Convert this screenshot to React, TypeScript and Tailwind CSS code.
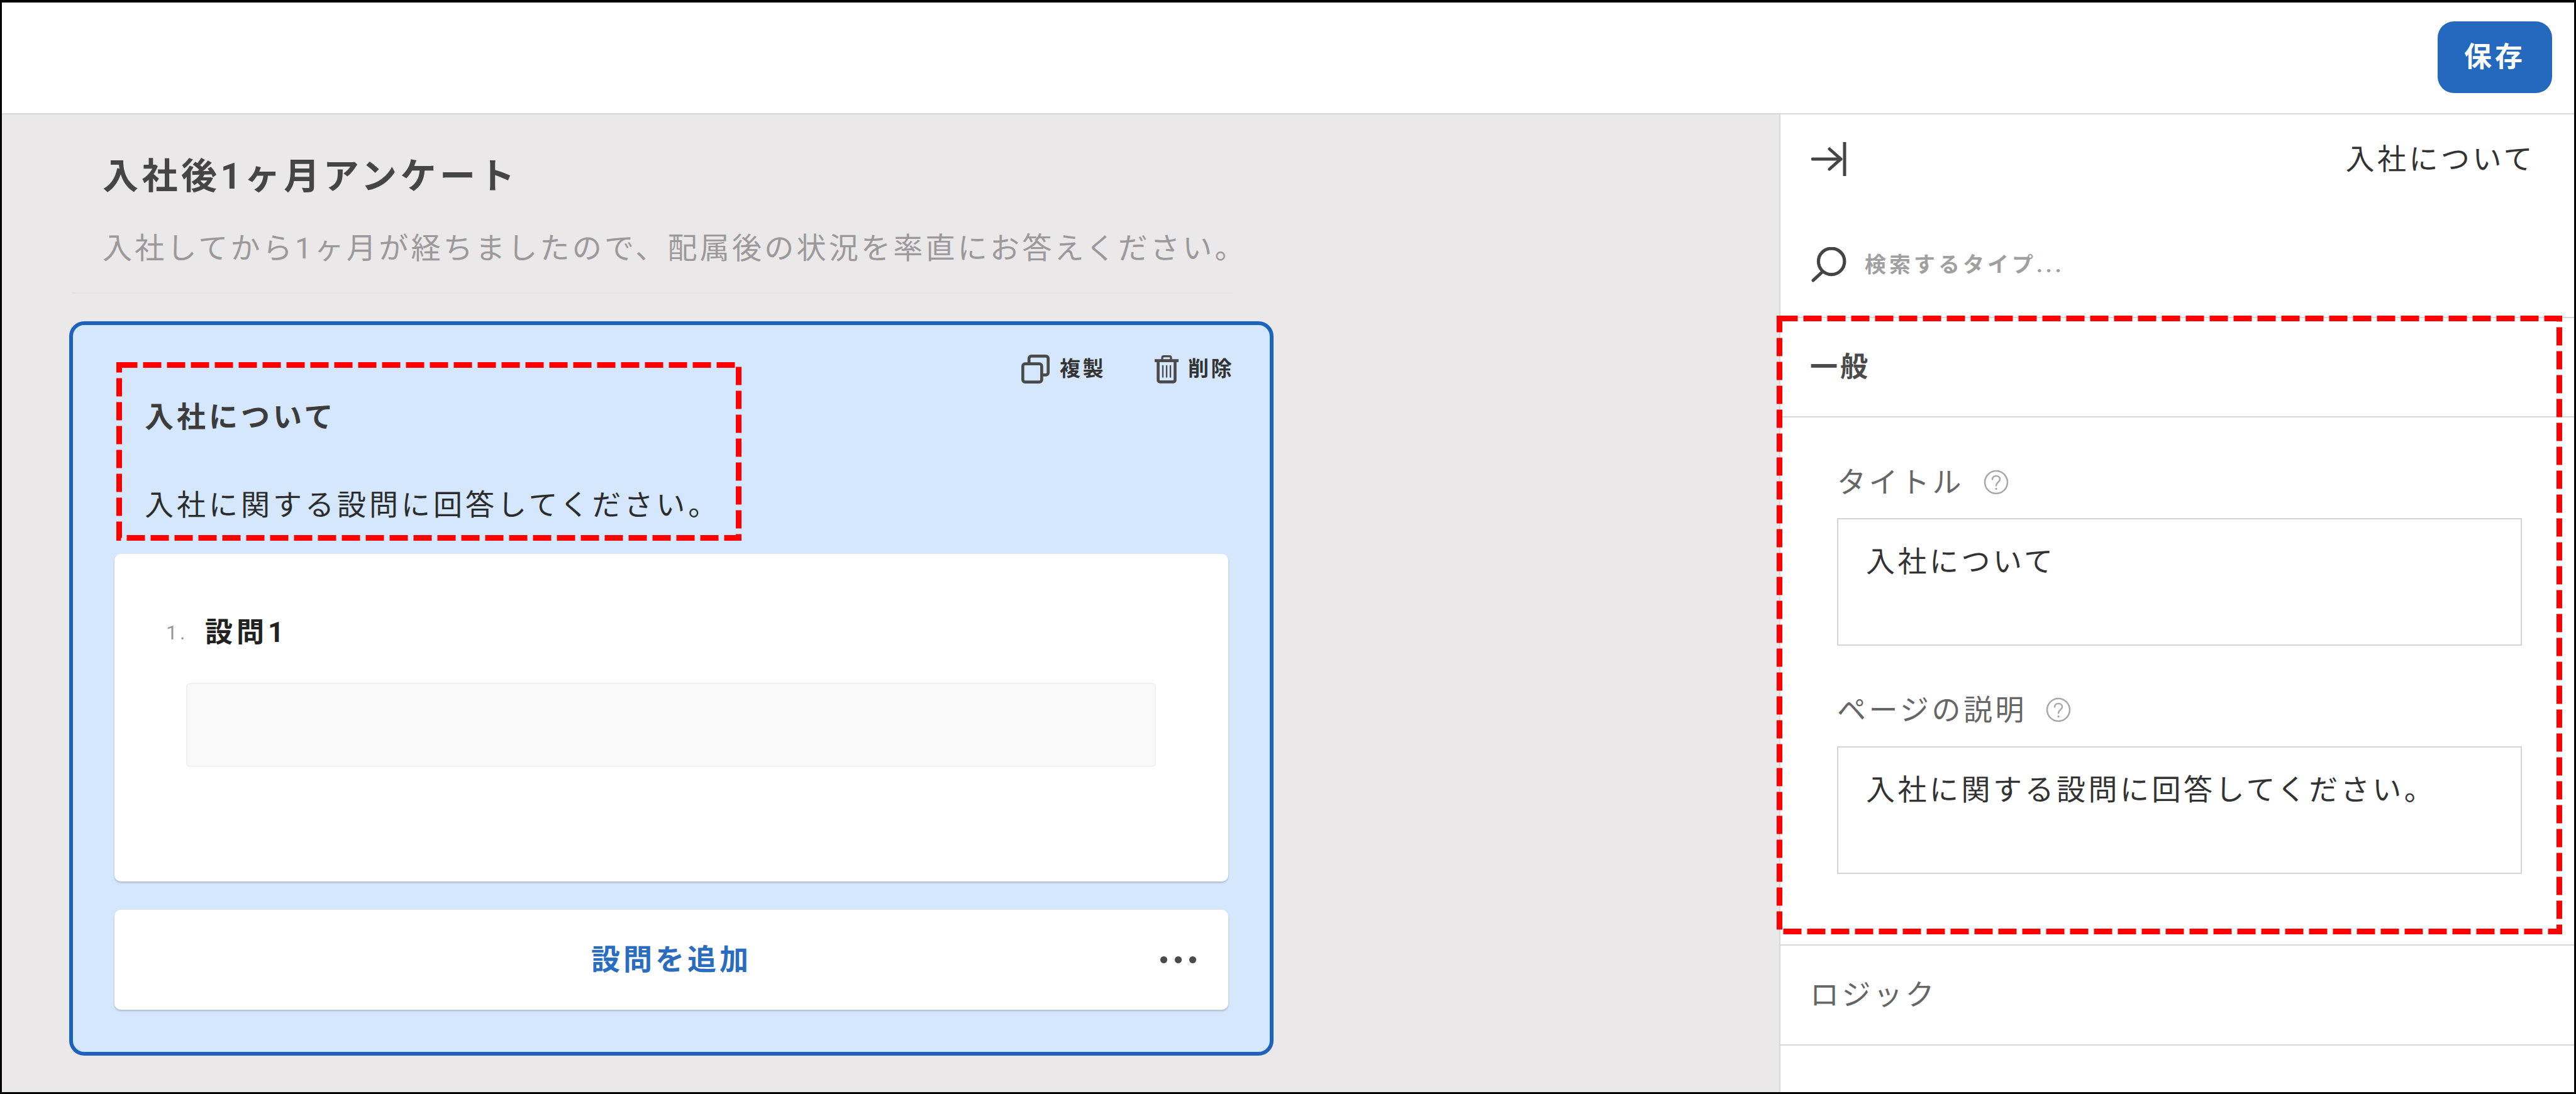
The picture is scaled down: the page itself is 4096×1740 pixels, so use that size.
import React from "react";

function CopyIcon() {
  return (
    <svg viewBox="0 0 48 49" className="w-[45px] h-[46px] shrink-0" fill="none" stroke="#4a4a4a" strokeWidth="5">
      <rect x="2.5" y="15.5" width="32" height="31" rx="4" />
      <path d="M13 15V6.5a4 4 0 0 1 4-4h24.500a4 4 0 0 1 4 4v24a4 4 0 0 1-4 4H35" />
    </svg>
  );
}

function TrashIcon() {
  return (
    <svg viewBox="0 0 41 49" className="w-[38px] h-[46px] shrink-0" fill="none" stroke="#4a4a4a">
      <path d="M1 10h39" strokeWidth="5" strokeLinecap="round" />
      <path d="M13 9V5a2.500 2.500 0 0 1 2.500-2.500h10A2.500 2.500 0 0 1 28 5v4" strokeWidth="3.500" />
      <path d="M6 10v33.500a3 3 0 0 0 3 3h23a3 3 0 0 0 3-3V10" strokeWidth="5" />
      <path d="M14 18v21M20.500 18v21M27 18v21" strokeWidth="2.500" />
    </svg>
  );
}

function CollapseIcon() {
  return (
    <svg viewBox="0 0 56 56" className="w-[56px] h-[56px] shrink-0" fill="none" stroke="#454545" strokeWidth="5" strokeLinecap="round" strokeLinejoin="round">
      <path d="M2 28h45" />
      <path d="M29 12l18 16-18 16" />
      <path d="M53 1v54" strokeLinecap="butt" />
    </svg>
  );
}

function SearchIcon() {
  return (
    <svg viewBox="0 0 54 54" className="w-[56px] h-[56px] shrink-0" fill="none" stroke="#454545" strokeWidth="5" strokeLinecap="round">
      <circle cx="31" cy="22" r="20" />
      <path d="M17 38L3 51" />
    </svg>
  );
}

function HelpIcon() {
  return (
    <svg viewBox="0 0 40 40" className="w-[40px] h-[40px] shrink-0" fill="none" stroke="#a8a8a8" strokeWidth="2.500" strokeLinecap="round">
      <circle cx="20" cy="20" r="18" />
      <path d="M14 15.500c0-3.500 2.500-5.500 6-5.500s6 2.200 6 5.200c0 4.800-6 4.800-6 10" />
      <circle cx="20" cy="30.500" r="1.200" fill="#a8a8a8" strokeWidth="1" />
    </svg>
  );
}

function Annotation({ width, height, className }: { width: number; height: number; className: string }) {
  return (
    <svg className={className} width={width} height={height} fill="none">
      <rect x="4.500" y="4.500" width={width - 9} height={height - 9} stroke="#ff0000" strokeWidth="9" strokeDasharray="29 9" />
    </svg>
  );
}

export default function App() {
  return (
    <div className="relative w-[4096px] h-[1740px] overflow-hidden border-x-[3px] border-t-4 border-b-[3px] border-black bg-white font-['Roboto','Noto_Sans_CJK_JP',sans-serif]">
      <header className="flex h-[178px] items-start justify-end border-b-2 border-[#d8d8d8] bg-white pr-[35px] pt-[30px]">
        <button className="flex h-[114px] w-[182px] items-center justify-center rounded-[26px] bg-[#2469bd] text-[44px] font-bold tracking-[5px] text-white">
          保存
        </button>
      </header>

      <div className="flex h-[1555px]">
        <main className="w-[2826px] shrink-0 bg-[#eae8e9] pl-[107px]">
          <div className="w-[1850px]">
            <div className="pl-[53px] pt-[63px]">
              <h1 className="whitespace-nowrap text-[57px] font-bold leading-[72px] tracking-[5.500px] text-[#454545]">入社後1ヶ月アンケート</h1>
              <p className="mt-[43px] whitespace-nowrap text-[47px] leading-[70px] tracking-[4.250px] text-[#9b9999]">入社してから1ヶ月が経ちましたので、配属後の状況を率直にお答えください。</p>
            </div>
            <div className="ml-[4px] mt-[35px] h-[2px] bg-[#e3e1e2]" />
          </div>

          <section className="mt-[44px] h-[1168px] w-[1915px] rounded-[24px] border-[6px] border-[#1d63bb] bg-[#d5e7fc]">
            <div className="flex items-center justify-end pr-[57px] pt-[45px]">
              <div className="flex items-center gap-[16px] text-[33px] font-bold tracking-[3.500px] text-[#333]">
                <CopyIcon />
                <span>複製</span>
              </div>
              <div className="ml-[78px] flex items-center gap-[15px] text-[33px] font-bold tracking-[3.500px] text-[#333]">
                <TrashIcon />
                <span>削除</span>
              </div>
            </div>

            <div className="mx-[66px]">
              <div className="pl-[48px]">
                <h2 className="mt-[21px] text-[46px] font-bold leading-[60px] tracking-[5px] text-[#3c3c3c]">入社について</h2>
                <p className="mt-[80px] text-[46px] leading-[60px] tracking-[5px] text-[#2c2c2c]">入社に関する設問に回答してください。</p>
              </div>

              <div className="mt-[48px] h-[521px] rounded-[10px] bg-white pl-[82px] pt-[97px] shadow-[0_2px_3px_rgba(0,0,0,0.2)]">
                <div className="flex items-center">
                  <span className="w-[62px] text-[32px] leading-[56px] tracking-[4px] text-[#999]">1.</span>
                  <span className="text-[44px] font-bold leading-[56px] tracking-[6px] text-[#222]">設問1</span>
                </div>
                <div className="ml-[32px] mt-[52px] h-[134px] w-[1542px] rounded-[6px] border-2 border-[#f0f0f0] bg-[#f9f9f9]" />
              </div>

              <div className="mt-[45px] grid h-[159px] grid-cols-[1fr_auto_1fr] items-center rounded-[10px] bg-white shadow-[0_2px_3px_rgba(0,0,0,0.2)]">
                <div />
                <span className="text-[46px] font-bold tracking-[5px] text-[#2a6cc0]">設問を追加</span>
                <div className="flex justify-end gap-[12px] pr-[51px]">
                  <i className="h-[11px] w-[11px] rounded-full bg-[#4a4a4a]" />
                  <i className="h-[11px] w-[11px] rounded-full bg-[#4a4a4a]" />
                  <i className="h-[11px] w-[11px] rounded-full bg-[#4a4a4a]" />
                </div>
              </div>
            </div>
          </section>
        </main>

        <aside className="flex-1 border-l-2 border-[#d8d8d8] bg-white">
          <div className="flex h-[142px] items-center justify-between pl-[49px] pr-[62px]">
            <CollapseIcon />
            <span className="text-[46px] leading-[60px] tracking-[4.500px] text-[#333]">入社について</span>
          </div>
          <div className="flex h-[182px] items-center gap-[29px] border-b-2 border-[#d8d8d8] pl-[49px] pt-[14px]">
            <SearchIcon />
            <span className="text-[34px] font-bold tracking-[5px] text-[#a0a0a0]">検索するタイプ...</span>
          </div>
          <div className="flex h-[158px] items-center border-b-2 border-[#d8d8d8] pl-[47px]">
            <span className="text-[44px] font-bold tracking-[4px] text-[#4a4a4a]">一般</span>
          </div>
          <div className="h-[840px] border-b-2 border-[#d8d8d8] pl-[90px] pt-[73px]">
            <div className="flex items-center gap-[31px]">
              <span className="text-[46px] leading-[60px] tracking-[4.500px] text-[#666]">タイトル</span>
              <HelpIcon />
            </div>
            <div className="mt-[27px] h-[203px] w-[1089px] border-2 border-[#d4d4d4] pl-[44px] pt-[37px] text-[46px] leading-[60px] tracking-[4.500px] text-[#333]">入社について</div>
            <div className="mt-[72px] flex items-center gap-[30px]">
              <span className="text-[46px] leading-[60px] tracking-[4.500px] text-[#666]">ページの説明</span>
              <HelpIcon />
            </div>
            <div className="mt-[28px] h-[203px] w-[1089px] border-2 border-[#d4d4d4] pl-[44px] pt-[37px] text-[46px] leading-[60px] tracking-[4.500px] text-[#333]">入社に関する設問に回答してください。</div>
          </div>
          <div className="flex h-[159px] items-center border-b-2 border-[#d8d8d8] pl-[47px]">
            <span className="text-[46px] tracking-[4.500px] text-[#666]">ロジック</span>
          </div>
        </aside>
      </div>

      <Annotation width={994} height={284} className="absolute left-[182px] top-[572px]" />
      <Annotation width={1249} height={984} className="absolute left-[2822px] top-[498px]" />
    </div>
  );
}
